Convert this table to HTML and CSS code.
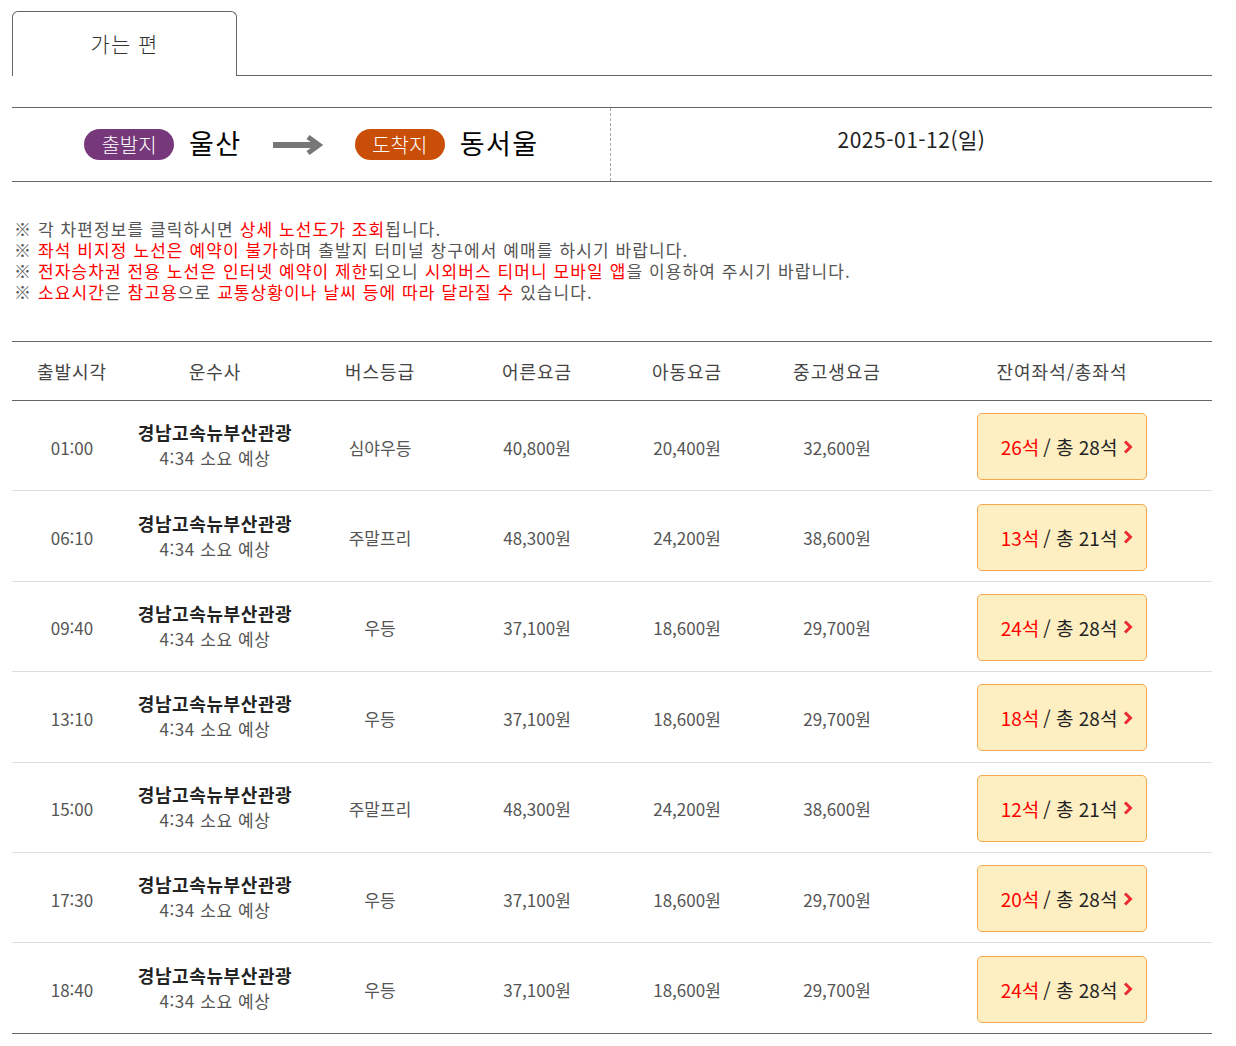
FILE: index.html
```html
<!DOCTYPE html>
<html lang="ko">
<head>
<meta charset="utf-8">
<link rel="stylesheet" href="styles.css">
</head>
<body>
<div class="page">
  <div class="tabs">
    <div class="tab">가는 편</div>
    <div class="tab-rest"></div>
  </div>

  <div class="route">
    <div class="route-left">
      <span class="badge dep">출발지</span>
      <span class="city">울산</span>
      <svg class="arrow" width="52" height="20" viewBox="0 0 52 20"><path d="M1 10 H44" stroke="#777" stroke-width="6"/><path d="M36 2 L47 10 L36 18" stroke="#777" stroke-width="5" fill="none"/></svg>
      <span class="badge arr">도착지</span>
      <span class="city">동서울</span>
    </div>
    <div class="route-right">2025-01-12(일)</div>
  </div>

  <ul class="notes">
    <li>※ 각 차편정보를 클릭하시면 <em>상세 노선도가 조회</em>됩니다.</li>
    <li>※ <em>좌석 비지정 노선은 예약이 불가</em>하며 출발지 터미널 창구에서 예매를 하시기 바랍니다.</li>
    <li>※ <em>전자승차권 전용 노선은 인터넷 예약이 제한</em>되오니 <em>시외버스 티머니 모바일 앱</em>을 이용하여 주시기 바랍니다.</li>
    <li>※ <em>소요시간</em>은 <em>참고용</em>으로 <em>교통상황이나 날씨 등에 따라 달라질 수</em> 있습니다.</li>
  </ul>

  <table class="tbl">
    <colgroup>
      <col class="c1"><col class="c2"><col class="c3"><col class="c4"><col class="c5"><col class="c6"><col class="c7">
    </colgroup>
    <thead>
      <tr><th>출발시각</th><th>운수사</th><th>버스등급</th><th>어른요금</th><th>아동요금</th><th>중고생요금</th><th>잔여좌석/총좌석</th></tr>
    </thead>
    <tbody>
      <tr><td>01:00</td><td><div class="co">경남고속뉴부산관광</div><div class="dur">4:34 소요 예상</div></td><td>심야우등</td><td>40,800원</td><td>20,400원</td><td>32,600원</td><td><a class="seat"><span class="rem">26석</span> / 총 28석<svg class="chev" width="10" height="14" viewBox="0 0 10 14"><path d="M2 1.5 L7.5 7 L2 12.5" stroke="#ec2b32" stroke-width="3" fill="none"/></svg></a></td></tr>
      <tr><td>06:10</td><td><div class="co">경남고속뉴부산관광</div><div class="dur">4:34 소요 예상</div></td><td>주말프리</td><td>48,300원</td><td>24,200원</td><td>38,600원</td><td><a class="seat"><span class="rem">13석</span> / 총 21석<svg class="chev" width="10" height="14" viewBox="0 0 10 14"><path d="M2 1.5 L7.5 7 L2 12.5" stroke="#ec2b32" stroke-width="3" fill="none"/></svg></a></td></tr>
      <tr><td>09:40</td><td><div class="co">경남고속뉴부산관광</div><div class="dur">4:34 소요 예상</div></td><td>우등</td><td>37,100원</td><td>18,600원</td><td>29,700원</td><td><a class="seat"><span class="rem">24석</span> / 총 28석<svg class="chev" width="10" height="14" viewBox="0 0 10 14"><path d="M2 1.5 L7.5 7 L2 12.5" stroke="#ec2b32" stroke-width="3" fill="none"/></svg></a></td></tr>
      <tr><td>13:10</td><td><div class="co">경남고속뉴부산관광</div><div class="dur">4:34 소요 예상</div></td><td>우등</td><td>37,100원</td><td>18,600원</td><td>29,700원</td><td><a class="seat"><span class="rem">18석</span> / 총 28석<svg class="chev" width="10" height="14" viewBox="0 0 10 14"><path d="M2 1.5 L7.5 7 L2 12.5" stroke="#ec2b32" stroke-width="3" fill="none"/></svg></a></td></tr>
      <tr><td>15:00</td><td><div class="co">경남고속뉴부산관광</div><div class="dur">4:34 소요 예상</div></td><td>주말프리</td><td>48,300원</td><td>24,200원</td><td>38,600원</td><td><a class="seat"><span class="rem">12석</span> / 총 21석<svg class="chev" width="10" height="14" viewBox="0 0 10 14"><path d="M2 1.5 L7.5 7 L2 12.5" stroke="#ec2b32" stroke-width="3" fill="none"/></svg></a></td></tr>
      <tr><td>17:30</td><td><div class="co">경남고속뉴부산관광</div><div class="dur">4:34 소요 예상</div></td><td>우등</td><td>37,100원</td><td>18,600원</td><td>29,700원</td><td><a class="seat"><span class="rem">20석</span> / 총 28석<svg class="chev" width="10" height="14" viewBox="0 0 10 14"><path d="M2 1.5 L7.5 7 L2 12.5" stroke="#ec2b32" stroke-width="3" fill="none"/></svg></a></td></tr>
      <tr><td>18:40</td><td><div class="co">경남고속뉴부산관광</div><div class="dur">4:34 소요 예상</div></td><td>우등</td><td>37,100원</td><td>18,600원</td><td>29,700원</td><td><a class="seat"><span class="rem">24석</span> / 총 28석<svg class="chev" width="10" height="14" viewBox="0 0 10 14"><path d="M2 1.5 L7.5 7 L2 12.5" stroke="#ec2b32" stroke-width="3" fill="none"/></svg></a></td></tr>
    </tbody>
  </table>
</div>
</body>
</html>
```

FILE: styles.css
```css
* { box-sizing: border-box; }
body {
  margin: 0;
  background: #fff;
  font-family: "Noto Sans CJK KR", "Noto Sans", sans-serif;
  color: #555;
}
.page {
  padding: 11px 24px 0 12px;
}
.tabs {
  display: flex;
  height: 65px;
}
.tab {
  width: 225px;
  border: 1px solid #666;
  border-bottom: none;
  border-radius: 6px 6px 0 0;
  text-align: center;
  font-size: 21px;
  letter-spacing: 1px;
  line-height: 62px;
  color: #333;
  font-weight: 300;
}
.tab-rest {
  flex: 1;
  border-bottom: 1px solid #666;
}
.route {
  margin-top: 31px;
  display: flex;
  height: 75px;
  border-top: 1px solid #666;
  border-bottom: 1px solid #666;
}
.route-left {
  width: 599px;
  border-right: 1px dashed #aaa;
  display: flex;
  align-items: center;
  padding-left: 72px;
}
.badge {
  display: inline-block;
  width: 90px;
  height: 31px;
  border-radius: 16px;
  color: #fff;
  font-size: 20px;
  line-height: 31px;
  text-align: center;
  font-weight: 300;
}
.dep { background: #76387a; }
.arr { background: #c94f08; }
.city {
  font-size: 27px;
  letter-spacing: 1.5px;
  color: #000;
  margin-left: 15px;
  line-height: 31px;
  margin-top: -4px;
}
.arrow { margin: 0 31px 0 30px; }
.route-right {
  flex: 1;
  display: flex;
  justify-content: center;
  align-items: center;
  font-size: 21px;
  letter-spacing: 0.5px;
  color: #222;
  padding-bottom: 12px;
}
.notes {
  list-style: none;
  margin: 36px 0 0 2px;
  padding: 0;
  font-size: 17px;
  letter-spacing: 1.1px;
  line-height: 21px;
  color: #555;
}
.notes em {
  font-style: normal;
  color: #f00;
}
.tbl {
  margin-top: 39px;
  width: 1200px;
  border-collapse: collapse;
  table-layout: fixed;
  border-top: 1px solid #666;
  border-bottom: 1px solid #666;
}
.c1 { width: 120px; }
.c2 { width: 166px; }
.c3 { width: 164px; }
.c4, .c5, .c6 { width: 150px; }
.c7 { width: 300px; }
.tbl th {
  height: 59px;
  font-weight: normal;
  font-size: 18px;
  letter-spacing: 1px;
  color: #444;
  border-bottom: 1px solid #666;
  padding: 0 0 1px;
}
.tbl td {
  height: 90.4px;
  text-align: center;
  font-size: 17px;
  color: #555;
  border-bottom: 1px solid #ddd;
  padding: 3px 0 0;
}
.tbl tbody tr:last-child td { border-bottom: none; }
.co {
  font-size: 18px;
  letter-spacing: 0.6px;
  font-weight: bold;
  color: #222;
  line-height: 26px;
}
.dur {
  font-size: 17px;
  letter-spacing: 0.6px;
  color: #555;
  line-height: 26px;
  margin-bottom: 4px;
}
.seat {
  display: inline-flex;
  align-items: center;
  justify-content: center;
  width: 170px;
  height: 67px;
  background: #fdefc2;
  border: 1px solid #f5a94f;
  border-radius: 5px;
  font-size: 19px;
  color: #222;
  padding-left: 10px;
  margin-top: -1px;
}
.rem { color: #f00; margin-right: 4px; }
.chev { margin-left: 6px; }
```
